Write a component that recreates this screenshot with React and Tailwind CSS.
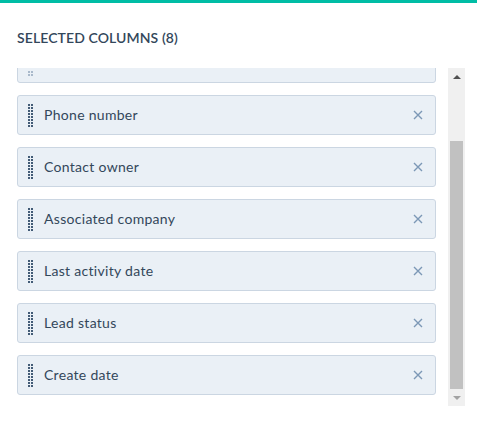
import React from 'react';

const columns = ['Phone number', 'Contact owner', 'Associated company', 'Last activity date', 'Lead status', 'Create date'];

function DragHandle() {
  return (
    <div className="grid grid-cols-2 gap-x-[1px] gap-y-[1px] w-[5px]">
      {Array.from({ length: 16 }).map((_, i) => (
        <span key={i} className="block w-[2px] h-[2px] bg-[#425b76]" />
      ))}
    </div>
  );
}

function ColumnItem({ label, className = '' }) {
  return (
    <div className={`flex items-center h-[40px] pl-[10px] pr-[12px] rounded-[3px] border border-[#cbd6e2] bg-[#eaf0f6] ${className}`}>
      <DragHandle />
      <span className="ml-[11px] mb-[2px] flex-1 text-[14px] tracking-[0.3px] text-[#33475b]">{label}</span>
      <svg width="10" height="10" viewBox="0 0 10 10" className="text-[#7c98b6]">
        <path d="M1 1 L9 9 M9 1 L1 9" stroke="currentColor" strokeWidth="1.4" />
      </svg>
    </div>
  );
}

export default function App() {
  return (
    <div className="w-[477px] h-[424px] bg-white font-['Lato','Open_Sans',sans-serif] overflow-hidden">
      <div className="h-[3px] bg-[#00bda5]" />
      <div className="pl-[17px] pt-[24px] h-[65px] text-[14px] font-semibold text-[#33475b] tracking-[0.1px]">
        SELECTED COLUMNS (8)
      </div>
      <div className="flex h-[338px]">
        <div className="flex-1 overflow-hidden pl-[17px] pr-[12px]">
          <div className="-mt-[25px] flex flex-col gap-[12px]">
            <div className="flex items-start h-[40px] pl-[10px] pt-[27px] rounded-[3px] border border-[#cbd6e2] bg-[#eaf0f6]">
              <div className="grid grid-cols-2 gap-[1px] w-[5px]">
                {Array.from({ length: 4 }).map((_, i) => (
                  <span key={i} className="block w-[2px] h-[2px] bg-[#a9b9cb]" />
                ))}
              </div>
            </div>
            {columns.map((c) => (
              <ColumnItem key={c} label={c} />
            ))}
          </div>
        </div>
        <div className="w-[17px] mr-[12px] bg-[#f0f0f0] flex flex-col items-center">
          <div className="h-[17px] flex items-center justify-center">
            <span className="block w-0 h-0 border-l-[4px] border-r-[4px] border-b-[4px] border-l-transparent border-r-transparent border-b-[#505050]" />
          </div>
          <div className="flex-1 w-full px-[2px] flex flex-col">
            <div className="h-[56px]" />
            <div className="flex-1 bg-[#c1c1c1]" />
          </div>
          <div className="h-[17px] flex items-center justify-center">
            <span className="block w-0 h-0 border-l-[4px] border-r-[4px] border-t-[4px] border-l-transparent border-r-transparent border-t-[#a3a3a3]" />
          </div>
        </div>
      </div>
    </div>
  );
}
